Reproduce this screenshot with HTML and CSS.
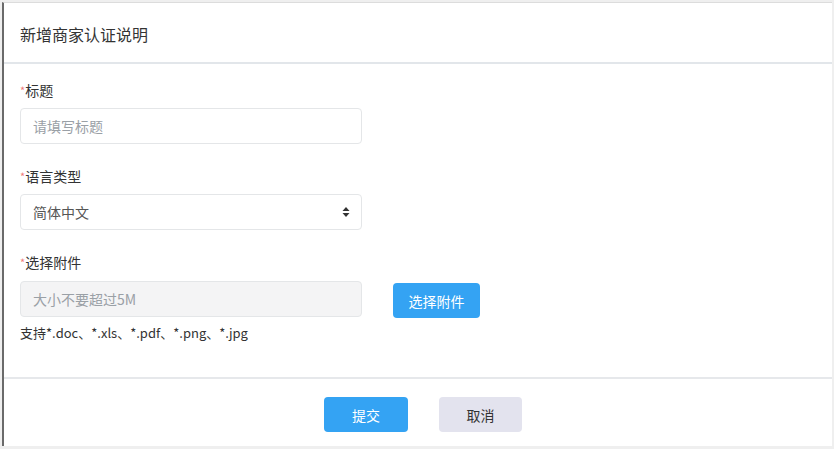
FILE: index.html
```html
<!DOCTYPE html>
<html lang="zh-CN">

<head>
    <meta charset="UTF-8">
    <meta name="viewport" content="width=device-width, initial-scale=1.0">
    <title>新增商家认证说明</title>
    <link rel="stylesheet" href="styles.css">
</head>

<body>

    <div class="modal">
        <div class="modal-header">
            <h3>新增商家认证说明</h3>
        </div>

        <form class="modal-body">
            <div class="field">
                <label><i>*</i>标题</label>
                <input type="text" class="control" placeholder="请填写标题">
            </div>

            <div class="field">
                <label><i>*</i>语言类型</label>
                <div class="select-wrap">
                    <select class="control">
                        <option>简体中文</option>
                        <option>English</option>
                    </select>
                    <svg class="arrows" width="8" height="12" viewBox="0 0 8 12">
                        <path d="M4 1 L7.5 5 L0.5 5 Z M4 11 L7.5 7 L0.5 7 Z" fill="#333"/>
                    </svg>
                </div>
            </div>

            <div class="field">
                <label><i>*</i>选择附件</label>
                <div class="file-row">
                    <input type="text" class="control" placeholder="大小不要超过5M" disabled>
                    <button type="button" class="btn btn-blue btn-file">选择附件</button>
                </div>
                <p class="hint">支持*.doc、*.xls、*.pdf、*.png、*.jpg</p>
            </div>
        </form>

        <div class="modal-footer">
            <button type="button" class="btn btn-blue">提交</button>
            <button type="button" class="btn btn-gray">取消</button>
        </div>
    </div>

</body>

</html>
```

FILE: styles.css
```css
* {
    margin: 0;
    padding: 0;
    box-sizing: border-box;
    font-family: "Noto Sans CJK SC", "Liberation Sans", sans-serif;
}

body {
    background-color: #efefef;
    padding: 2px 2px 3px 2px;
}

.modal {
    width: 830px;
    height: 444px;
    background-color: #FFFFFF;
    border-top: 1px solid #dcdcdc;
    border-left: 2px solid #6a6a6a;
    display: flex;
    flex-direction: column;
}

.modal-header {
    height: 61px;
    padding: 0 16px;
    display: flex;
    align-items: center;
    border-bottom: 2px solid #e2e6ea;
}

.modal-header h3 {
    font-size: 16px;
    font-weight: 400;
    color: #333;
    margin-top: 2px;
}

.modal-body {
    padding: 16px 16px 0 16px;
    height: 315px;
    border-bottom: 2px solid #e6e8eb;
}

.field {
    margin-bottom: 22px;
}

.field label {
    display: block;
    font-size: 14px;
    line-height: 20px;
    color: #333;
    margin-bottom: 8px;
}

.field label i {
    font-style: normal;
    color: #f07b7b;
    font-size: 11px;
    vertical-align: top;
}

.control {
    width: 342px;
    height: 36px;
    border: 1px solid #e4e6e8;
    border-radius: 4px;
    padding: 0 12px;
    font-size: 14px;
    color: #555;
    background-color: #fff;
    outline: none;
}

.control::placeholder {
    color: #9aa0a6;
}

.control:disabled {
    background-color: #f4f4f5;
}

.select-wrap {
    position: relative;
    width: 342px;
}

select.control {
    appearance: none;
    -webkit-appearance: none;
}

.arrows {
    position: absolute;
    right: 12px;
    top: 12px;
    pointer-events: none;
}

.file-row {
    display: flex;
    align-items: center;
}

.btn {
    border: none;
    border-radius: 4px;
    font-size: 14px;
    cursor: pointer;
}

.btn-blue {
    background-color: #34a3f3;
    color: #fff;
}

.btn-gray {
    background-color: #e3e3ee;
    color: #333;
}

.btn-file {
    width: 87px;
    height: 35px;
    margin-left: 31px;
    margin-top: 3px;
}

.hint {
    font-size: 13px;
    line-height: 16px;
    color: #333;
    margin-top: 7px;
}

.modal-footer {
    flex: 1;
    display: flex;
    justify-content: center;
    gap: 31px;
    padding: 18px 0 0 10px;
}

.modal-footer .btn {
    width: 84px;
    height: 35px;
}

.modal-footer .btn-gray {
    width: 83px;
}
```
